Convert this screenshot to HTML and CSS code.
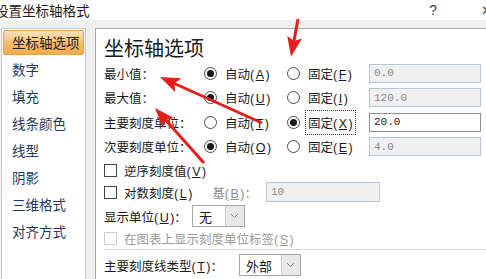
FILE: index.html
```html
<!doctype html>
<html lang="zh-CN">
  <head>
    <meta charset="UTF-8" />
    <title>设置坐标轴格式</title>
    <link rel="stylesheet" href="styles.css">
  </head>
  <body>
    <div class="dialog">
      <!-- 标题栏 -->
      <div class="titlebar">
        <span class="title">设置坐标轴格式</span>
        <span class="help">?</span>
        <span class="close">✕</span>
      </div>

      <div class="body">
        <!-- 左侧分类 -->
        <ul class="nav">
          <li class="active">坐标轴选项</li>
          <li>数字</li>
          <li>填充</li>
          <li>线条颜色</li>
          <li>线型</li>
          <li>阴影</li>
          <li>三维格式</li>
          <li>对齐方式</li>
        </ul>

        <!-- 选项内容 -->
        <div class="content">
          <h1>坐标轴选项</h1>

          <div class="bounds">
            <span>最小值：</span>
            <label class="opt"><i class="radio on"></i><span>自动(<u>A</u>)</span></label>
            <label class="opt"><i class="radio"></i><span>固定(<u>F</u>)</span></label>
            <span class="field off">0.0</span>

            <span>最大值：</span>
            <label class="opt"><i class="radio on"></i><span>自动(<u>U</u>)</span></label>
            <label class="opt"><i class="radio"></i><span>固定(<u>I</u>)</span></label>
            <span class="field off">120.0</span>

            <span>主要刻度单位：</span>
            <label class="opt"><i class="radio"></i><span>自动(<u>T</u>)</span></label>
            <label class="opt"><i class="radio on"></i><span class="focus">固定(<u>X</u>)</span></label>
            <span class="field">20.0</span>

            <span>次要刻度单位：</span>
            <label class="opt"><i class="radio on"></i><span>自动(<u>O</u>)</span></label>
            <label class="opt"><i class="radio"></i><span>固定(<u>E</u>)</span></label>
            <span class="field off">4.0</span>
          </div>

          <div class="check"><i class="box"></i><span>逆序刻度值(<u>V</u>)</span></div>
          <div class="check">
            <i class="box"></i><span>对数刻度(<u>L</u>)</span>
            <span class="base">基(<u>B</u>)：</span>
            <span class="field off base-field">10</span>
          </div>
          <div class="pick pick-unit">
            <span>显示单位(<u>U</u>)：</span>
            <span class="select unit">无<b class="drop"><svg width="9" height="6" viewBox="0 0 9 6"><polyline points="1,1 4.5,4.5 8,1" fill="none" stroke="#8a8a8a" stroke-width="1"/></svg></b></span>
          </div>
          <div class="check dim"><i class="box"></i><span>在图表上显示刻度单位标签(<u>S</u>)</span></div>

          <hr class="sep">

          <div class="pick">
            <span>主要刻度线类型(<u>T</u>)：</span>
            <span class="select tick">外部<b class="drop"><svg width="9" height="6" viewBox="0 0 9 6"><polyline points="1,1 4.5,4.5 8,1" fill="none" stroke="#8a8a8a" stroke-width="1"/></svg></b></span>
          </div>
        </div>
      </div>

      <!-- 标注箭头 -->
      <svg class="arrows" width="486" height="279" viewBox="0 0 486 279">
        <defs>
          <marker id="head" viewBox="0 0 20 15" refX="9" refY="7.5" markerWidth="20" markerHeight="15" markerUnits="userSpaceOnUse" orient="auto">
            <path d="M0 0 L20 7.5 L0 15 L4 7.5 Z" fill="#e3201c"/>
          </marker>
        </defs>
        <line x1="298" y1="19" x2="293" y2="46" stroke="#e3201c" stroke-width="3" marker-end="url(#head)"/>
        <line x1="262" y1="123" x2="170" y2="81.5" stroke="#e3201c" stroke-width="3" marker-end="url(#head)"/>
        <line x1="204" y1="163" x2="162.3" y2="116.2" stroke="#e3201c" stroke-width="3" marker-end="url(#head)"/>
      </svg>
    </div>
  </body>
</html>
```

FILE: styles.css
```css
/* Base */
* {
  box-sizing: border-box;
}

body {
  margin: 0;
  width: 486px;
  height: 279px;
  overflow: hidden;
  background: #f0f0f0;
  font-family: "Noto Sans CJK SC", sans-serif;
  color: #1a1a1a;
}

.dialog {
  position: relative;
  height: 279px;
}

/* Title bar */
.titlebar {
  height: 20px;
  background: #fff;
  display: flex;
  align-items: center;
  font-size: 13.5px;
  line-height: 20px;
}

.title {
  margin-left: -5px;
}

.help {
  margin-left: auto;
  font-family: "Liberation Sans", sans-serif;
  color: #444;
  font-size: 14px;
}

.close {
  margin-left: 44px;
  margin-right: -6px;
  color: #444;
  font-size: 13px;
}

/* Body */
.body {
  display: flex;
  gap: 9px;
  padding: 8px 0 0 1px;
  height: 259px;
}

.nav {
  width: 85px;
  margin: 0;
  padding: 0;
  list-style: none;
  background: #fff;
  border: 1px solid #cbcbcb;
  border-bottom: none;
}

.nav li {
  height: 27px;
  line-height: 27px;
  padding-left: 10px;
  font-size: 13.5px;
  color: #1f3762;
}

.nav li.active {
  margin: 1px;
  height: 25px;
  line-height: 23px;
  padding-left: 8px;
  color: #222;
  border: 1px solid #e5a24e;
  border-radius: 2px;
  background: linear-gradient(#fde4ba, #f8b862 60%, #f6ad4c);
}

/* Latin letters and brackets from Liberation, Chinese from Noto */
.content {
  flex: 1;
  background: #fff;
  border: 1px solid #a9a9a9;
  border-right: none;
  border-bottom: none;
  padding: 7px 0 0 8px;
  font-family: "Liberation Sans", "Noto Sans CJK SC", sans-serif;
  font-size: 12.5px;
}

.content u {
  margin: 0 1.5px;
}

.content h1 {
  margin: 0;
  font-family: "Noto Sans CJK SC", sans-serif;
  font-size: 20px;
  line-height: 24px;
  font-weight: normal;
}

/* Bounds grid */
.bounds {
  display: grid;
  grid-template-columns: 100px 83px 82px 112px;
  grid-auto-rows: 24.5px;
  align-items: center;
  margin-top: 1px;
}

.opt {
  display: flex;
  align-items: center;
  gap: 8px;
}

.radio {
  position: relative;
  width: 13px;
  height: 13px;
  border: 1px solid #4a4a4a;
  border-radius: 50%;
  background: #fff;
}

.radio.on::after {
  content: "";
  position: absolute;
  left: 2px;
  top: 2px;
  width: 7px;
  height: 7px;
  border-radius: 50%;
  background: #1a1a1a;
}

.focus {
  outline: 1px dotted #333;
  outline-offset: 2px;
}

.field {
  display: flex;
  align-items: center;
  height: 19px;
  padding-left: 4px;
  border: 1px solid #8e8e8e;
  background: #fff;
  font-family: "Liberation Mono", monospace;
  font-size: 11px;
  color: #1a1a1a;
}

.field.off {
  border-color: #b8c6d6;
  background: #f0f0f0;
  color: #8a8a8a;
}

/* Checkbox rows */
.check {
  display: flex;
  align-items: center;
  gap: 7px;
  height: 22px;
}

.box {
  width: 13px;
  height: 13px;
  border: 1px solid #444;
  background: #fff;
}

.check.dim {
  height: 18px;
  color: #9a9a9a;
}

.check.dim .box {
  border-color: #d0d0d0;
}

.base {
  margin-left: 13px;
  color: #8c8c8c;
}

.base-field {
  width: 114px;
  height: 20px;
  margin-left: 2px;
  border-color: #c4c4c4;
}

/* Select rows */
.pick {
  display: flex;
  align-items: center;
  height: 24px;
}

.pick-unit {
  height: 26px;
}

.select {
  display: flex;
  align-items: center;
  height: 22px;
  padding-left: 6px;
  border: 1px solid #a6a6a6;
  background: #fff;
  font-family: "Noto Sans CJK SC", sans-serif;
  font-size: 13px;
}

.select.unit {
  width: 53px;
  margin-left: 5px;
}

.select.tick {
  width: 62px;
  margin-left: 16px;
}

.drop {
  margin-left: auto;
  width: 19px;
  height: 20px;
  display: flex;
  align-items: center;
  justify-content: center;
  background: #e8e8e8;
  border-left: 1px solid #cfcfcf;
}

.sep {
  margin: 2px 0 3px;
  border: none;
  border-top: 1px solid #d9d9d9;
}

/* Annotation arrows */
.arrows {
  position: absolute;
  left: 0;
  top: 0;
  pointer-events: none;
}
```
